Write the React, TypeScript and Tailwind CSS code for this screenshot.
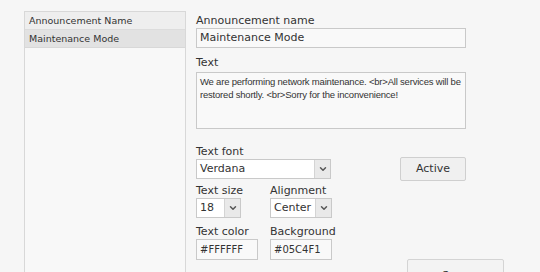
import { ChevronDown } from "lucide-react"

function Select({ value, width }: { value: string; width: string }) {
  return (
    <div className={`flex h-[20px] ${width} items-stretch border border-[#c9c9c9] bg-white`}>
      <span className="flex-1 px-[3px] text-[11px] leading-[18px] text-[#333]">{value}</span>
      <span className="flex w-[16px] items-center justify-center border-l border-[#d4d4d4] bg-[#e9e9e9]">
        <ChevronDown className="h-[10px] w-[10px] text-[#555]" strokeWidth={3.5} />
      </span>
    </div>
  )
}

function Label({ children }: { children: React.ReactNode }) {
  return <div className="whitespace-nowrap text-[11px] leading-[12px] text-[#333]">{children}</div>
}

export default function App() {
  return (
    <div className="flex h-[272px] w-[540px] overflow-hidden bg-[#f6f6f6] font-['DejaVu_Sans',sans-serif]">
      {/* list of announcements */}
      <div className="ml-[24px] mt-[11px] h-[280px] w-[162px] shrink-0 border border-[#d8d8d8] bg-[#f8f8f8]">
        <div className="h-[18px] border-b border-[#dcdcdc] bg-[#eeeeee] pl-[4px] text-[9.5px] leading-[17px] text-[#333]">
          Announcement Name
        </div>
        <div className="h-[18px] border-b border-[#d8d8d8] bg-[#e2e2e2] pl-[4px] text-[9.5px] leading-[17px] text-[#333]">
          Maintenance Mode
        </div>
      </div>

      {/* form */}
      <div className="ml-[10px] flex w-[308px] shrink-0 flex-col pt-[15px]">
        <div className="flex w-[270px] flex-col">
          <Label>Announcement name</Label>
          <div className="mt-[1px] h-[20px] border border-[#c9c9c9] bg-[#f9f9f9] px-[3px] text-[11px] leading-[18px] text-[#333]">
            Maintenance Mode
          </div>

          <div className="mt-[9px]">
            <Label>Text</Label>
          </div>
          <div className="mt-[3px] h-[57px] border border-[#c9c9c9] bg-[#f9f9f9] px-[3px] pt-[2px] font-['Liberation_Sans',sans-serif] text-[9.5px] leading-[13px] tracking-[-0.2px] text-[#333]">
            We are performing network maintenance. &lt;br&gt;All services will be restored shortly. &lt;br&gt;Sorry for the inconvenience!
          </div>

          <div className="mt-[17px] flex items-end justify-between">
            <div>
              <Label>Text font</Label>
              <div className="mt-[1px]">
                <Select value="Verdana" width="w-[135px]" />
              </div>
            </div>
            <button className="mb-[-2px] h-[24px] w-[66px] rounded-[2px] border border-[#cfcfcf] bg-[#f0f0f0] text-[11px] text-[#333]">
              Active
            </button>
          </div>

          <div className="mt-[6px] flex">
            <div className="w-[74px]">
              <Label>Text size</Label>
              <div className="mt-[1px]">
                <Select value="18" width="w-[45px]" />
              </div>
            </div>
            <div>
              <Label>Alignment</Label>
              <div className="mt-[1px]">
                <Select value="Center" width="w-[62px]" />
              </div>
            </div>
          </div>

          <div className="mt-[8px] flex">
            <div className="w-[74px]">
              <Label>Text color</Label>
              <div className="mt-[1px] h-[21px] w-[62px] border border-[#c9c9c9] bg-[#f9f9f9] px-[3px] text-[10px] leading-[19px] text-[#333]">
                #FFFFFF
              </div>
            </div>
            <div>
              <Label>Background</Label>
              <div className="mt-[1px] h-[21px] w-[62px] border border-[#c9c9c9] bg-[#f9f9f9] px-[3px] text-[10px] leading-[19px] text-[#333]">
                #05C4F1
              </div>
            </div>
          </div>
        </div>

        {/* partially visible save button */}
        <div className="mt-[-1px] flex justify-end">
          <button className="h-[25px] w-[97px] shrink-0 rounded-[2px] border border-[#d4d4d4] bg-[#f3f3f3] pt-[8px] text-[11px] leading-[12px] text-[#333]">
            Save
          </button>
        </div>
      </div>
    </div>
  )
}
